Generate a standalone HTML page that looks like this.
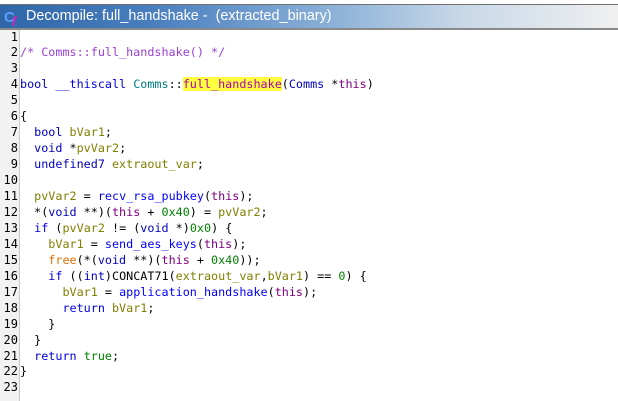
<!DOCTYPE html><html><head><style>
body{margin:0;width:618px;height:401px;background:#fff;overflow:hidden;position:relative;font-family:"DejaVu Sans Mono",monospace}
.title{position:absolute;left:0;top:4px;width:618px;height:23px;border-top:1px solid #707070;border-bottom:2px solid #8a8a8a;background:linear-gradient(90deg,#2f66a8 0%,#4a7fbf 25%,#8fb3d8 55%,#c9d8e8 75%,#f0f0f0 100%);box-sizing:content-box}
.title span{position:absolute;left:26px;top:3px;color:#fff;font:14.4px "Liberation Sans",sans-serif;white-space:pre}
.gut{position:absolute;left:0;top:30px;width:19px;height:371px;background:#f2f2f2;border-right:1px solid #c8c8c8}
.ln{position:absolute;left:0;width:18px;text-align:right;font-size:12px;color:#000}
.cd{position:absolute;left:20px;font-size:11.75px;white-space:pre;color:#000}
.k{color:#0000e0}.c{color:#9a40d8}.t{color:#0000c0}.v{color:#808000}.f{color:#0000ff}.p{color:#800080}.n{color:#008000}.s{color:#008080}.o{color:#e07000}.h{background:#ffff40;color:#b000b0}
</style></head><body>
<div class="title"><svg style="position:absolute;left:4px;top:3px" width="18" height="18"><text x="0" y="14" font-family="Liberation Sans" font-weight="bold" font-size="15" fill="#5aa0ff">C</text><text x="8" y="17" font-family="Liberation Serif" font-style="italic" font-weight="bold" font-size="13" fill="#e020c0">f</text></svg><span>Decompile: full_handshake -  (extracted_binary)</span></div>
<div class="gut"></div>
<div id="c"></div>
<script>
var L=['','<span class="c">/* Comms::full_handshake() */</span>','','<span class="t">bool</span> <span class="k">__thiscall</span> <span class="s">Comms</span>::<span class="h">full_handshake</span>(<span class="t">Comms</span> *<span class="p">this</span>)','','{',
'  <span class="t">bool</span> <span class="v">bVar1</span>;','  <span class="t">void</span> *<span class="v">pvVar2</span>;','  <span class="t">undefined7</span> <span class="v">extraout_var</span>;','',
'  <span class="v">pvVar2</span> = <span class="f">recv_rsa_pubkey</span>(<span class="p">this</span>);',
'  *(<span class="t">void</span> **)(<span class="p">this</span> + <span class="n">0x40</span>) = <span class="v">pvVar2</span>;',
'  <span class="k">if</span> (<span class="v">pvVar2</span> != (<span class="t">void</span> *)<span class="n">0x0</span>) {',
'    <span class="v">bVar1</span> = <span class="f">send_aes_keys</span>(<span class="p">this</span>);',
'    <span class="o">free</span>(*(<span class="t">void</span> **)(<span class="p">this</span> + <span class="n">0x40</span>));',
'    <span class="k">if</span> ((<span class="t">int</span>)CONCAT71(<span class="v">extraout_var</span>,<span class="v">bVar1</span>) == <span class="n">0</span>) {',
'      <span class="v">bVar1</span> = <span class="f">application_handshake</span>(<span class="p">this</span>);',
'      <span class="k">return</span> <span class="v">bVar1</span>;','    }','  }','  <span class="k">return</span> <span class="n">true</span>;','}',''];
var h='';for(var i=0;i<L.length;i++){var y=29.5+i*15.95;h+='<div class="ln" style="top:'+y+'px">'+(i+1)+'</div><div class="cd" style="top:'+y+'px">'+L[i]+'</div>';}
document.getElementById('c').innerHTML=h;
</script>
</body></html>
